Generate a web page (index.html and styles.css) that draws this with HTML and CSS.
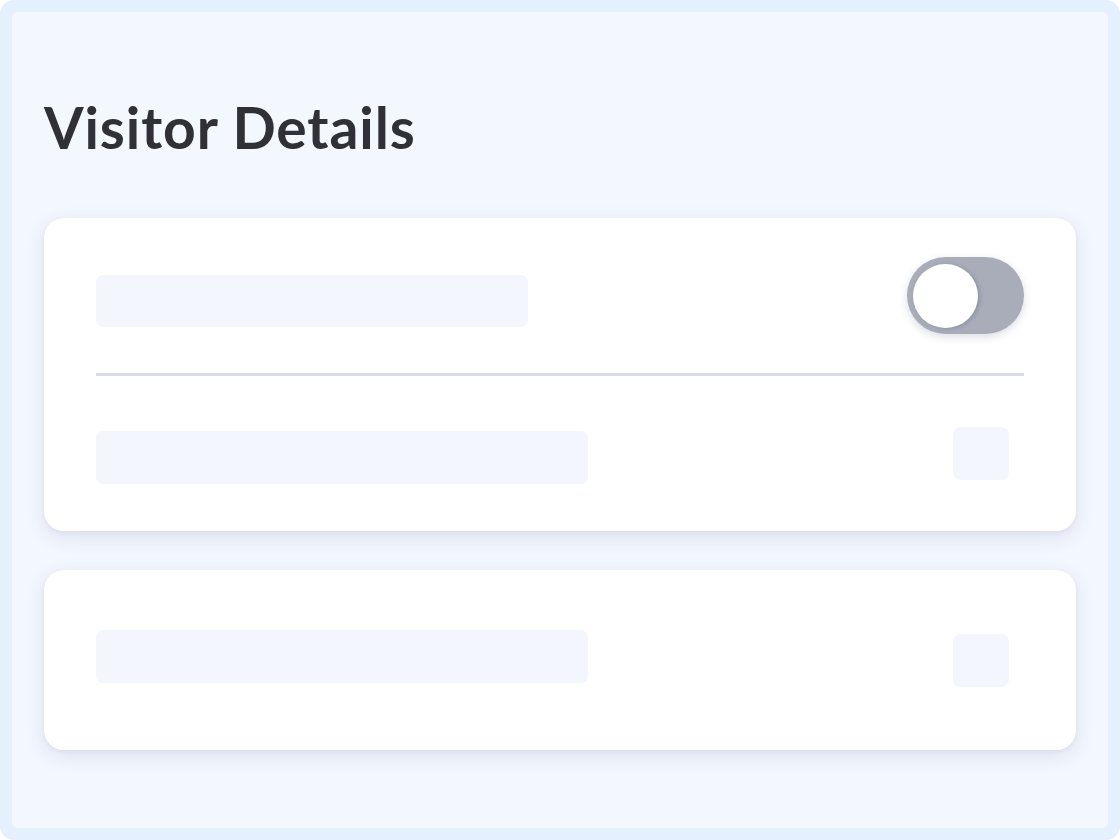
FILE: index.html
```html
<!DOCTYPE html>
<html lang="en">
<head>
<meta charset="utf-8">
<title>Visitor Details</title>
<link rel="stylesheet" href="styles.css">
</head>
<body>
<div class="frame">
  <main class="panel">
    <h1 class="title">Visitor Details</h1>
    <section class="card card-main">
      <div class="row row-top">
        <div class="skeleton bar-short"></div>
        <div class="toggle"><span class="knob"></span></div>
      </div>
      <div class="divider"></div>
      <div class="row row-bottom">
        <div class="skeleton bar-long"></div>
        <div class="skeleton square"></div>
      </div>
    </section>
    <section class="card card-second">
      <div class="row row-second">
        <div class="skeleton bar-long"></div>
        <div class="skeleton square square-low"></div>
      </div>
    </section>
  </main>
</div>
</body>
</html>
```

FILE: styles.css
```css
* { box-sizing: border-box; }
html, body { margin: 0; padding: 0; background: #ffffff; }
body {
  width: 1120px;
  height: 840px;
  font-family: "Lato", "Inter", sans-serif;
}
.frame {
  width: 1120px;
  height: 840px;
  background: #e4f0fd;
  border-radius: 14px;
  padding: 12px;
}
.panel {
  height: 100%;
  background: #f3f7fe;
  border-radius: 5px;
  padding: 0 32px;
  display: flex;
  flex-direction: column;
}
.title {
  margin: 80px 0 0 0;
  height: 126px;
  font-size: 57px;
  line-height: 70px;
  font-weight: 700;
  color: #2f3136;
  letter-spacing: 0.9px;
}
.card {
  background: #ffffff;
  border-radius: 20px;
  box-shadow: 0 6px 20px rgba(60, 70, 120, 0.12), 0 1px 5px rgba(60, 70, 120, 0.07);
  padding: 0 52px;
}
.card-main {
  height: 313px;
  padding-top: 39px;
}
.card-second {
  margin-top: 39px;
  height: 180px;
  padding-top: 60px;
}
.row {
  display: flex;
  justify-content: space-between;
  align-items: flex-start;
}
.skeleton {
  background: #f3f6fd;
  border-radius: 7px;
}
.bar-short {
  width: 432px;
  height: 52px;
  margin-top: 18px;
}
.bar-long {
  width: 492px;
  height: 53px;
  margin-top: 4px;
}
.row-second .bar-long { margin-top: 0; }
.square {
  width: 56px;
  height: 53px;
  margin-right: 15px;
  border-radius: 8px;
}
.square-low { margin-top: 4px; }
.toggle {
  width: 117px;
  height: 77px;
  border-radius: 40px;
  background: #a9adb9;
  padding: 7px 6px;
  box-shadow: 0 3px 8px rgba(60, 70, 110, 0.18);
}
.knob {
  display: block;
  width: 65px;
  height: 64px;
  border-radius: 50%;
  background: #ffffff;
  box-shadow: 2px 1px 4px rgba(60, 70, 110, 0.25);
}
.divider {
  height: 3px;
  background: #d9dce7;
  margin-top: 39px;
}
.row-bottom { margin-top: 51px; }
```
